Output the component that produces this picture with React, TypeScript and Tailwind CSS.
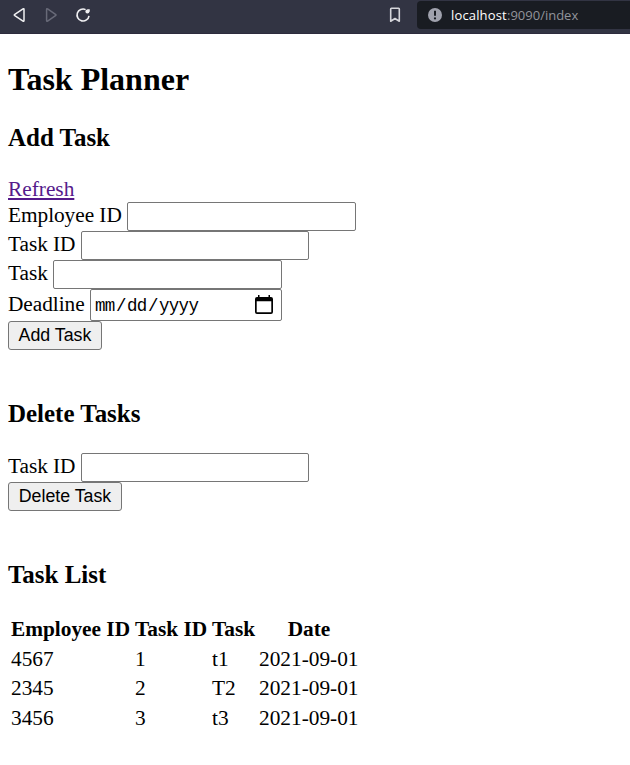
import type { ReactNode } from "react";

const tasks = [
  { employee: "4567", id: "1", task: "t1", date: "2021-09-01" },
  { employee: "2345", id: "2", task: "T2", date: "2021-09-01" },
  { employee: "3456", id: "3", task: "t3", date: "2021-09-01" },
];

function BrowserBar() {
  return (
    <header className="flex h-[34px] items-start border-b border-[#2d2b3d] bg-[#323443] text-[#f0f0f2]">
      <svg className="ml-[12px] mt-[7px] h-4 w-4 shrink-0" viewBox="0 0 16 16" fill="none" stroke="currentColor" strokeWidth="1.5" strokeLinejoin="round">
        <path d="M11 1.9q1-.5 1 .5v11.2q0 1-1 .5L2.8 8.7q-1-.7 0-1.4Z" />
      </svg>
      <svg className="ml-[16px] mt-[7px] h-4 w-4 shrink-0 text-[#686a78]" viewBox="0 0 16 16" fill="none" stroke="currentColor" strokeWidth="1.5" strokeLinejoin="round">
        <path d="M3.6 1.9q-1-.5-1 .5v11.2q0 1 1 .5l7.9-5.4q1-.7 0-1.4Z" />
      </svg>
      <svg className="ml-[15px] mt-[7px] h-4 w-4 shrink-0" viewBox="0 0 16 16" fill="none" stroke="currentColor" strokeWidth="1.6">
        <path d="M10.6 2.6A6 6 0 1 0 14 8.8" />
        <circle cx="12.4" cy="4.6" r="2" fill="currentColor" stroke="none" />
        <path d="M12.4 2.8h1.8v1.8" strokeWidth="1.1" />
      </svg>
      <svg className="ml-[296px] mt-[7px] h-4 w-4 shrink-0 text-[#d6d6db]" viewBox="0 0 16 16" fill="none" stroke="currentColor" strokeWidth="1.6" strokeLinejoin="round">
        <path d="M3.7 2q0-.7.7-.7h7.2q.7 0 .7.7v12.2L8 11.5l-4.3 2.7Z" />
      </svg>
      <div className="ml-[14px] mt-px flex h-7 flex-1 items-center rounded-l bg-[#191c22] pl-[11px]">
        <svg className="h-[14px] w-[14px] shrink-0" viewBox="0 0 14 14">
          <circle cx="7" cy="7" r="7" fill="#a0a2ad" />
          <path d="M7 2.7v5.1" stroke="#191c22" strokeWidth="2" />
          <circle cx="7" cy="10.4" r="1.1" fill="#191c22" />
        </svg>
        <div className="ml-[9px] flex whitespace-nowrap font-['Open_Sans','Noto_Sans',sans-serif] text-[13px] leading-[18px]">
          <span className="w-[56px] tracking-[0.15px] text-white">localhost</span>
          <span className="text-[#92949b]">:9090/index</span>
        </div>
      </div>
    </header>
  );
}

function Field({ label, labelWidth, inputWidth }: { label: string; labelWidth: string; inputWidth: string }) {
  return (
    <label className="flex h-[29px]">
      <span className={`${labelWidth} shrink-0 whitespace-nowrap leading-[26px] tracking-[-0.05px]`}>{label}</span>
      <input className={`${inputWidth} h-[29px] rounded-[2px] border border-[#767676] bg-white px-1 outline-none`} />
    </label>
  );
}

function Button({ children, width }: { children: ReactNode; width: string }) {
  return (
    <button className={`${width} block h-[29px] whitespace-nowrap rounded-[3px] border border-[#767676] bg-[#efefef] pb-px font-['Liberation_Sans',sans-serif] text-[17.78px] leading-[26px]`}>
      {children}
    </button>
  );
}

function Heading({ children }: { children: ReactNode }) {
  return <h3 className="h-7 text-[24.96px] font-bold leading-7">{children}</h3>;
}

export default function App() {
  return (
    <div className="min-h-[765px] bg-white font-['Liberation_Serif',serif] text-[21.33px] text-black">
      <BrowserBar />
      <main className="px-2 pt-[27px]">
        <h2 className="h-[37px] text-[32px] font-bold leading-[37px]">Task Planner</h2>
        <section className="mt-[26px]">
          <Heading>Add Task</Heading>
          <a className="mt-[25px] block h-[25px] w-fit leading-[25px] text-[#551a8b] underline decoration-2 underline-offset-2" href="#">Refresh</a>
          <Field label="Employee ID" labelWidth="w-[119px]" inputWidth="w-[229px]" />
          <Field label="Task ID" labelWidth="w-[73px]" inputWidth="w-[228px]" />
          <Field label="Task" labelWidth="w-[45px]" inputWidth="w-[229px]" />
          <label className="flex h-8">
            <span className="w-[82px] shrink-0 leading-[30px] tracking-[-0.05px]">Deadline</span>
            <span className="flex h-8 w-[192px] items-center rounded-[2px] border border-[#767676] pl-1 pr-2">
              <span className="flex whitespace-nowrap pt-[3px] font-['Liberation_Mono',monospace] text-[17.5px] tracking-[-0.7px]">
                <span className="w-[21px]">mm</span>
                <span className="w-[11px]">/</span>
                <span className="w-[21px]">dd</span>
                <span className="w-[11px]">/</span>
                <span>yyyy</span>
              </span>
              <svg className="ml-auto h-5 w-[18px] shrink-0" viewBox="0 0 18 20">
                <path d="M3 0h1.5v2h9V0H15v2h1q2 0 2 2v13q0 2-2 2H2q-2 0-2-2V4q0-2 2-2h1Zm-1.3 6.3v11h14.6v-11Z" fill="black" fillRule="evenodd" />
              </svg>
            </span>
          </label>
          <Button width="w-[94px]">Add Task</Button>
        </section>
        <section className="mt-[50px]">
          <Heading>Delete Tasks</Heading>
          <div className="mt-[25px]">
            <Field label="Task ID" labelWidth="w-[73px]" inputWidth="w-[228px]" />
            <Button width="w-[114px]">Delete Task</Button>
          </div>
        </section>
        <section className="mt-[50px]">
          <Heading>Task List</Heading>
          <table className="ml-[3px] mt-[25px] w-[348px] table-fixed border-collapse text-left">
            <colgroup>
              <col className="w-[124px]" />
              <col className="w-[77px]" />
              <col className="w-[47px]" />
              <col className="w-[100px]" />
            </colgroup>
            <thead>
              <tr className="h-[30px] whitespace-nowrap leading-[25px]">
                <th className="p-0">Employee ID</th>
                <th className="p-0">Task ID</th>
                <th className="p-0">Task</th>
                <th className="p-0 text-center">Date</th>
              </tr>
            </thead>
            <tbody>
              {tasks.map((row) => (
                <tr key={row.id} className="h-[29.5px] whitespace-nowrap leading-[25px]">
                  <td className="p-0 pt-px">{row.employee}</td>
                  <td className="p-0 pt-px">{row.id}</td>
                  <td className="p-0 pt-px">{row.task}</td>
                  <td className="p-0 pt-px">{row.date}</td>
                </tr>
              ))}
            </tbody>
          </table>
        </section>
      </main>
    </div>
  );
}
